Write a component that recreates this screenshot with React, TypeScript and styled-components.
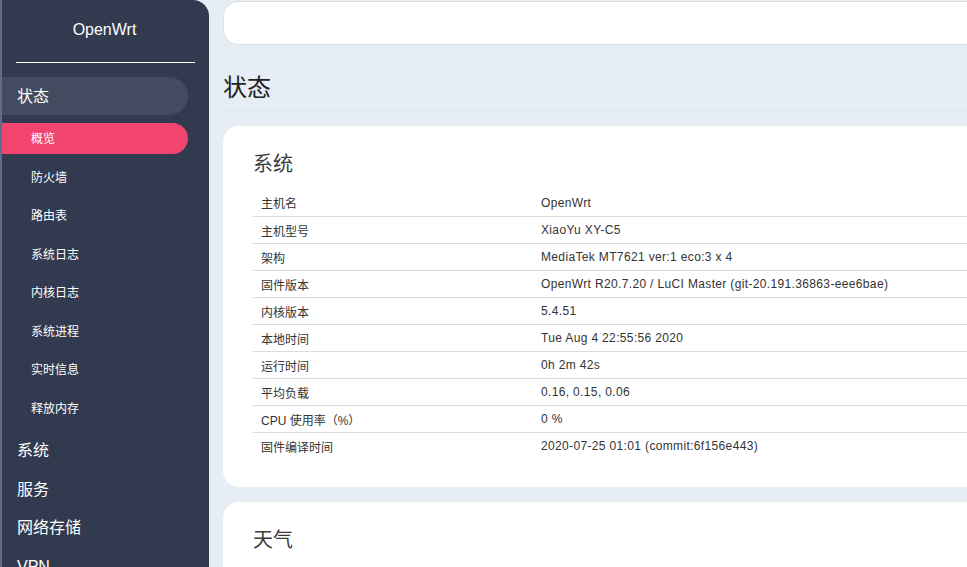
import React from 'react';
import styled, { createGlobalStyle } from 'styled-components';

const GlobalStyle = createGlobalStyle`
  html, body {
    margin: 0;
    padding: 0;
    background: #e6edf4;
    overflow: hidden;
    font-family: "Liberation Sans", "Noto Sans CJK SC", sans-serif;
  }
`;

const Page = styled.div`
  display: flex;
  width: 1400px;
  height: 567px;
  align-items: flex-start;
`;

const Sidebar = styled.aside`
  width: 207px;
  height: 620px;
  flex-shrink: 0;
  background: #313a4f;
  border-left: 2px solid #5e6c90;
  border-top-right-radius: 16px;
  color: #fff;
`;

const Brand = styled.div`
  height: 59px;
  display: flex;
  align-items: center;
  justify-content: center;
  font-size: 16px;
  padding-right: 2px;
`;

const Divider = styled.div`
  margin: 3px 14px 14px 14px;
  height: 1px;
  background: #fff;
`;

const Menu = styled.ul`
  list-style: none;
  margin: 0;
  padding: 0;
`;

const TopItem = styled.li<{ $open?: boolean }>`
  width: 186px;
  height: 38px;
  line-height: 40px;
  padding-left: 15px;
  box-sizing: border-box;
  font-size: 16px;
  border-radius: 0 19px 19px 0;
  background: ${(p) => (p.$open ? '#434b60' : 'transparent')};
  margin-bottom: ${(p) => (p.$open ? '8px' : '0.5px')};
`;

const SubMenu = styled.ul`
  list-style: none;
  margin: 0 0 4px 0;
  padding: 0;
`;

const SubItem = styled.li<{ $active?: boolean }>`
  width: 186px;
  height: 31px;
  line-height: 33px;
  margin-bottom: 7.5px;
  padding-left: 29px;
  box-sizing: border-box;
  font-size: 12px;
  border-radius: 0 16px 16px 0;
  background: ${(p) => (p.$active ? '#f1456f' : 'transparent')};
`;

const Main = styled.main`
  flex: 1;
  padding: 1px 0 0 14px;
  display: flex;
  flex-direction: column;
`;

const TopBar = styled.div`
  height: 42px;
  background: #fff;
  border: 1px solid #dcdfe3;
  border-radius: 15px;
`;

const PageTitle = styled.h2`
  margin: 0;
  padding: 24px 0 0 0;
  height: 41px;
  font-size: 24px;
  font-weight: 400;
  color: #222;
  border-bottom: 1px solid #dde4ec;
  font-family: "Noto Sans CJK SC", sans-serif;
  line-height: 34px;
`;

const Card = styled.section`
  margin-top: 15px;
  background: #fff;
  border-radius: 16px;
  padding: 22px 30px 28px 30px;
`;

const CardTitle = styled.h3`
  margin: 0 0 11px 0;
  font-size: 20px;
  font-weight: 400;
  color: #3c3c3c;
  line-height: 30px;
  font-family: "Noto Sans CJK SC", sans-serif;
`;

const Row = styled.div`
  display: grid;
  grid-template-columns: 280px 1fr;
  height: 27px;
  align-items: center;
  font-size: 12px;
  color: #333;
  & + & {
    border-top: 1px solid #dcdcdc;
    height: 26px;
  }
`;

const Cell = styled.div<{ $value?: boolean }>`
  padding-left: 8px;
  white-space: nowrap;
  letter-spacing: ${(p) => (p.$value ? '0.35px' : '0')};
`;

const menuSub = ['概览', '防火墙', '路由表', '系统日志', '内核日志', '系统进程', '实时信息', '释放内存'];
const menuTop = ['系统', '服务', '网络存储', 'VPN'];

const systemRows: [string, string][] = [
  ['主机名', 'OpenWrt'],
  ['主机型号', 'XiaoYu XY-C5'],
  ['架构', 'MediaTek MT7621 ver:1 eco:3 x 4'],
  ['固件版本', 'OpenWrt R20.7.20 / LuCI Master (git-20.191.36863-eee6bae)'],
  ['内核版本', '5.4.51'],
  ['本地时间', 'Tue Aug 4 22:55:56 2020'],
  ['运行时间', '0h 2m 42s'],
  ['平均负载', '0.16, 0.15, 0.06'],
  ['CPU 使用率（%）', '0 %'],
  ['固件编译时间', '2020-07-25 01:01 (commit:6f156e443)'],
];

export default function App() {
  return (
    <>
      <GlobalStyle />
      <Page>
        <Sidebar>
          <Brand>OpenWrt</Brand>
          <Divider />
          <Menu>
            <TopItem $open>状态</TopItem>
            <SubMenu>
              {menuSub.map((s, i) => (
                <SubItem key={s} $active={i === 0}>
                  {s}
                </SubItem>
              ))}
            </SubMenu>
            {menuTop.map((m) => (
              <TopItem key={m}>{m}</TopItem>
            ))}
          </Menu>
        </Sidebar>
        <Main>
          <TopBar />
          <PageTitle>状态</PageTitle>
          <Card>
            <CardTitle>系统</CardTitle>
            {systemRows.map(([k, v]) => (
              <Row key={k}>
                <Cell>{k}</Cell>
                <Cell $value>{v}</Cell>
              </Row>
            ))}
          </Card>
          <Card>
            <CardTitle>天气</CardTitle>
          </Card>
        </Main>
      </Page>
    </>
  );
}
